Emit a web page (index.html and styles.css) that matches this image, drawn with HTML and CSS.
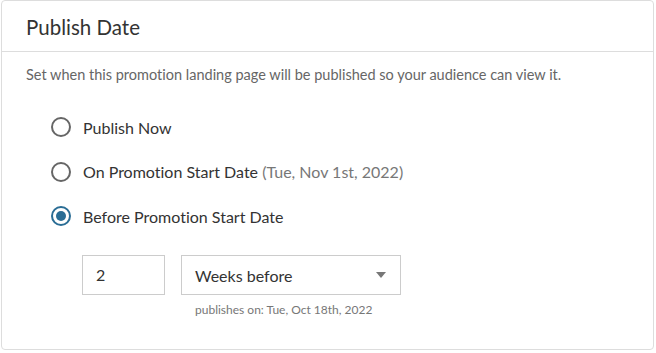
FILE: index.html
```html
<!DOCTYPE html>
<html lang="en">
<head>
    <meta charset="UTF-8">
    <title>Publish Date</title>
    <link rel="stylesheet" href="styles.css">
</head>
<body>
    <div class="panel">
        <div class="panel-header">Publish Date</div>
        <div class="panel-body">
            <p class="panel-desc">Set when this promotion landing page will be published so your audience can view it.</p>
            <div class="radio-list">
                <label class="radio-row">
                    <span class="radio"></span>
                    <span class="radio-label">Publish Now</span>
                </label>
                <label class="radio-row">
                    <span class="radio"></span>
                    <span class="radio-label">On Promotion Start Date <span class="muted">(Tue, Nov 1st, 2022)</span></span>
                </label>
                <label class="radio-row">
                    <span class="radio checked"></span>
                    <span class="radio-label">Before Promotion Start Date</span>
                </label>
            </div>
            <div class="offset-row">
                <div class="num-input">2</div>
                <div class="select-wrap">
                    <div class="select-box">
                        <span>Weeks before</span>
                        <span class="caret"></span>
                    </div>
                    <div class="hint">publishes on: Tue, Oct 18th, 2022</div>
                </div>
            </div>
        </div>
    </div>
</body>
</html>
```

FILE: styles.css
```css
body {
    margin: 0;
    font-family: 'Lato', sans-serif;
    font-variant-ligatures: none;
    background: #fff;
    color: #333;
}
.panel {
    margin: 0 2px 0 1px;
    height: 348px;
    border: 1px solid #ddd;
    border-radius: 4px;
}
.panel-header {
    height: 51px;
    box-sizing: border-box;
    padding: 14px 24px 0;
    font-size: 20.5px;
    color: #333;
    border-bottom: 1px solid #ddd;
}
.panel-body {
    padding: 14px 24px 0;
}
.panel-desc {
    margin: 0;
    font-size: 14.5px;
    color: #666;
}
.radio-list {
    display: flex;
    flex-direction: column;
    gap: 24.5px;
    margin: 34px 0 0 25px;
}
.radio-row {
    display: flex;
    align-items: center;
    gap: 12px;
    font-size: 16px;
    height: 20px;
}
.radio {
    width: 20px;
    height: 20px;
    box-sizing: border-box;
    border: 2px solid #666;
    border-radius: 50%;
    display: flex;
    align-items: center;
    justify-content: center;
}
.radio.checked {
    border-color: #2a6d95;
}
.radio.checked::after {
    content: '';
    width: 10px;
    height: 10px;
    border-radius: 50%;
    background: #2a6d95;
}
.muted {
    color: #777;
}
.offset-row {
    display: flex;
    gap: 16px;
    margin: 29px 0 0 56px;
}
.num-input {
    width: 83px;
    height: 40px;
    box-sizing: border-box;
    border: 1px solid #ccc;
    padding: 0 13px;
    font-size: 16px;
    line-height: 38px;
}
.select-box {
    width: 220px;
    height: 40px;
    box-sizing: border-box;
    border: 1px solid #ccc;
    padding: 0 13px;
    font-size: 16px;
    display: flex;
    align-items: center;
    justify-content: space-between;
}
.caret {
    width: 0;
    height: 0;
    border-left: 5.5px solid transparent;
    border-right: 5.5px solid transparent;
    border-top: 6px solid #777;
    margin-right: 1px;
}
.hint {
    margin: 7px 0 0 14px;
    font-size: 12px;
    color: #777;
}
```
